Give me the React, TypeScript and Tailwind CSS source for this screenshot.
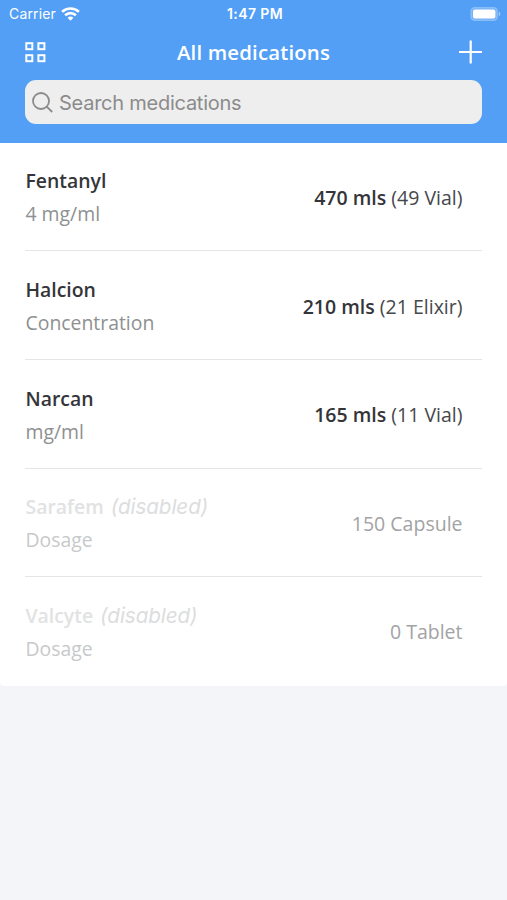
type Medication = {
  name: string;
  detail: string;
  total?: string;
  amount: string;
  disabled?: boolean;
};

const medications: Medication[] = [
  { name: 'Fentanyl', detail: '4 mg/ml', total: '470 mls', amount: '(49 Vial)' },
  { name: 'Halcion', detail: 'Concentration', total: '210 mls', amount: '(21 Elixir)' },
  { name: 'Narcan', detail: 'mg/ml', total: '165 mls', amount: '(11 Vial)' },
  { name: 'Sarafem', detail: 'Dosage', amount: '150 Capsule', disabled: true },
  { name: 'Valcyte', detail: 'Dosage', amount: '0 Tablet', disabled: true },
];

function WifiIcon() {
  return (
    <svg width="19" height="14" viewBox="0 0 19 14" fill="none" stroke="white" strokeWidth="2.6">
      <path d="M1.1 4.9C5.8.4 13.2.4 17.9 4.9" />
      <path d="M4.1 8.3c3.1-2.9 7.7-2.9 10.8 0" />
      <path d="M6.6 10.8c1.6-1.6 4.2-1.6 5.8 0L9.5 13.8z" fill="white" stroke="none" />
    </svg>
  );
}

function BatteryIcon() {
  return (
    <svg width="31" height="14" viewBox="0 0 31 14">
      <rect x="1" y="0.5" width="26.4" height="13" rx="4" fill="white" fillOpacity="0.2" stroke="white" strokeOpacity="0.25" strokeWidth="1.4" />
      <rect x="3" y="2.5" width="22.4" height="9" rx="2" fill="white" />
      <path d="M28.8 4.8c2 .7 2 3.7 0 4.4z" fill="white" fillOpacity="0.45" />
    </svg>
  );
}

function GridIcon() {
  return (
    <svg width="21" height="21" viewBox="0 0 21 21" fill="none" stroke="white" strokeWidth="2">
      <rect x="1.3" y="1.2" width="6" height="6" />
      <rect x="13.4" y="1.2" width="6" height="6" />
      <rect x="1.3" y="13.2" width="6" height="6" />
      <rect x="13.4" y="13.2" width="6" height="6" />
    </svg>
  );
}

function Row({ item, last }: { item: Medication; last: boolean }) {
  return (
    <li className={`flex h-[108.7px] items-center justify-between pr-[19.5px] pl-[0.5px] ${last ? '' : 'border-b border-[#e4e5e6] pt-[2px]'}`}>
      <div className="flex flex-col">
        <div className={`flex h-[33px] text-[19.4px] leading-[33px] whitespace-nowrap ${item.disabled ? 'text-[#e1e2e3]' : 'text-[#343539]'}`}>
          <span className="font-semibold">{item.name}</span>
          {item.disabled && <span className="ml-[7px] font-[Inter] text-[20.6px] tracking-[-0.05px] text-[#dcddde] italic">(disabled)</span>}
        </div>
        <div className={`h-[33px] text-[19.4px] leading-[33px] ${item.disabled ? 'text-[#c7c9ca]' : 'text-[#8e9091]'}`}>
          {item.detail}
        </div>
      </div>
      <div className={`text-[19.5px] leading-[33px] whitespace-nowrap ${item.disabled ? 'text-[#a2a3a4]' : 'text-[#46474a]'}`}>
        {item.total && <span className="font-semibold text-[#343539]">{item.total} </span>}
        {item.amount}
      </div>
    </li>
  );
}

export default function App() {
  return (
    <div className="h-[900px] w-[507px] overflow-hidden bg-[#f3f5f8] font-['Open_Sans',sans-serif]">
      <header className="h-[142.5px] bg-[#529ff5] text-white">
        <div className="grid h-[27px] grid-cols-3 items-center pr-[6px] pl-[9px] font-[Inter]">
          <div className="flex items-center gap-[5.5px] text-[14px] tracking-[0.15px]">
            <span>Carrier</span>
            <WifiIcon />
          </div>
          <span className="text-center text-[14px] font-semibold tracking-[0.4px]">1:47 PM</span>
          <div className="flex justify-end">
            <BatteryIcon />
          </div>
        </div>
        <div className="grid h-[50px] grid-cols-[40px_1fr_40px] items-center px-[25px]">
          <button aria-label="Menu"><GridIcon /></button>
          <h1 className="text-center text-[20.4px] font-semibold tracking-[0.16px]">All medications</h1>
          <button aria-label="Add medication" className="flex justify-end">
            <svg width="24" height="24" viewBox="0 0 24 24" stroke="white" strokeWidth="2.2">
              <path d="M12.7 .5v23M1 12h23" />
            </svg>
          </button>
        </div>
        <div className="px-[25px] pt-[3px]">
          <div className="flex h-[44px] items-center rounded-[11px] bg-[#eeeeee] pl-[7px]">
            <svg width="21" height="21" viewBox="0 0 21 21" fill="none" stroke="#8b8b8c" strokeWidth="1.8">
              <circle cx="9" cy="9" r="8" />
              <path d="m14.7 14.7 5.5 5.3" />
            </svg>
            <span className="ml-[6px] pt-px font-[Inter] text-[20px] tracking-[-0.25px] text-[#8b8b8c]">Search medications</span>
          </div>
        </div>
      </header>
      <ul className="rounded-b-[4px] bg-white px-[25px]">
        {medications.map((item, index) => (
          <Row key={item.name} item={item} last={index === medications.length - 1} />
        ))}
      </ul>
    </div>
  );
}
